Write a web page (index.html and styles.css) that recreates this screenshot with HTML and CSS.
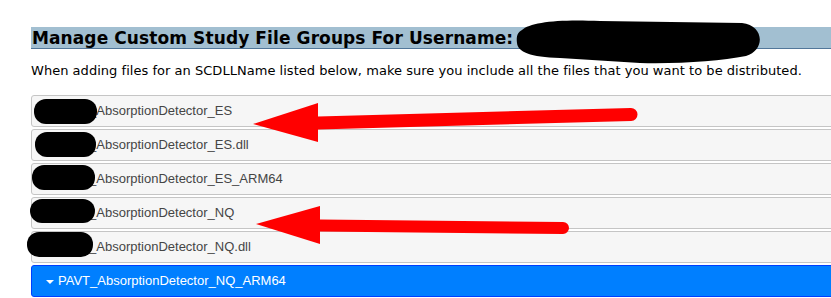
FILE: index.html
```html
<!DOCTYPE html>
<html>
<head>
    <meta charset="UTF-8">
    <title>Manage Custom Study File Groups</title>
    <link rel="stylesheet" href="styles.css">
</head>
<body>
    <div class="page">
        <h2 class="title">Manage Custom Study File Groups For Username: <span class="user">user</span></h2>
        <p class="intro">When adding files for an SCDLLName listed below, make sure you include all the files that you want to be distributed.</p>

        <div class="accordion">
            <h3 class="acc-header"><span class="caret"></span>PAVT_AbsorptionDetector_ES</h3>
            <h3 class="acc-header"><span class="caret"></span>PAVT_AbsorptionDetector_ES.dll</h3>
            <h3 class="acc-header"><span class="caret"></span>PAVT_AbsorptionDetector_ES_ARM64</h3>
            <h3 class="acc-header"><span class="caret"></span>PAVT_AbsorptionDetector_NQ</h3>
            <h3 class="acc-header"><span class="caret"></span>PAVT_AbsorptionDetector_NQ.dll</h3>
            <h3 class="acc-header active"><span class="caret"></span>PAVT_AbsorptionDetector_NQ_ARM64</h3>
        </div>
    </div>

    <!-- markup drawn over the screenshot: redactions and arrows -->
    <svg class="marks" width="831" height="298" viewBox="0 0 831 298">
        <path class="blot" d="M522 30 C530 22 560 19 600 21 L742 23 C764 25 766 50 746 56 C720 61 680 64 640 63 L560 58 C530 57 518 52 517 43 C516 36 518 32 522 30 Z"/>
        <rect class="blot" x="34" y="99" width="63" height="25" rx="12"/>
        <rect class="blot" x="35" y="132" width="61" height="25" rx="12"/>
        <rect class="blot" x="32" y="165" width="63" height="25" rx="12"/>
        <rect class="blot" x="30" y="199" width="65" height="24" rx="12"/>
        <rect class="blot" x="27" y="232" width="66" height="25" rx="12"/>

        <line class="shaft" x1="318" y1="123" x2="631" y2="114.5" stroke-width="13"/>
        <polygon class="head" points="253,124 318,103 318,142"/>
        <line class="shaft" x1="320" y1="225.5" x2="563" y2="228" stroke-width="12"/>
        <polygon class="head" points="256,224 320,206 320,244"/>
    </svg>
</body>
</html>
```

FILE: styles.css
```css
html, body{
    margin: 0;
    overflow: hidden;
}

body{
    background: #fff;
    font-family: "DejaVu Sans", Verdana, sans-serif;
    position: relative;
}

.page{
    padding: 27px 0 0 31px;
    width: 840px;
}

.title{
    margin: 0;
    height: 21px;
    line-height: 22px;
    font-size: 17px;
    font-weight: bold;
    letter-spacing: 0.1px;
    color: #000;
    background: #a2bfd1;
    border-bottom: 1px solid #52779a;
    padding-left: 1px;
    white-space: nowrap;
}

.title .user{
    visibility: hidden;
}

.intro{
    margin: 0;
    padding-top: 14px;
    font-size: 13px;
    line-height: 16px;
    letter-spacing: 0.03px;
    color: #000;
    white-space: nowrap;
}

.accordion{
    margin-top: 16px;
    font-family: "Liberation Sans", Arial, sans-serif;
}

.acc-header{
    margin: 2px 0 0;
    padding: 7px 0 7px 12px;
    font-size: 13px;
    font-weight: normal;
    line-height: 16px;
    color: #454545;
    background: #f6f6f6;
    border: 1px solid #c5c5c5;
    border-radius: 3px;
    display: flex;
    align-items: center;
}

.acc-header:first-child{
    margin-top: 0;
}

.caret{
    width: 0;
    height: 0;
    border-top: 4px solid transparent;
    border-bottom: 4px solid transparent;
    border-left: 4px solid #777;
    margin: 0 7px 0 2px;
}

.acc-header.active{
    background: #007fff;
    border-color: #003eff;
    color: #fff;
}

.acc-header.active .caret{
    border-left: 4px solid transparent;
    border-right: 4px solid transparent;
    border-top: 4px solid #fff;
    border-bottom: 0;
    margin: 1px 4px 0 2px;
}

.marks{
    position: absolute;
    top: 0;
    left: 0;
    pointer-events: none;
}

.blot{
    fill: #000;
}

.shaft{
    stroke: #ff0000;
    stroke-linecap: round;
}

.head{
    fill: #ff0000;
}
```
